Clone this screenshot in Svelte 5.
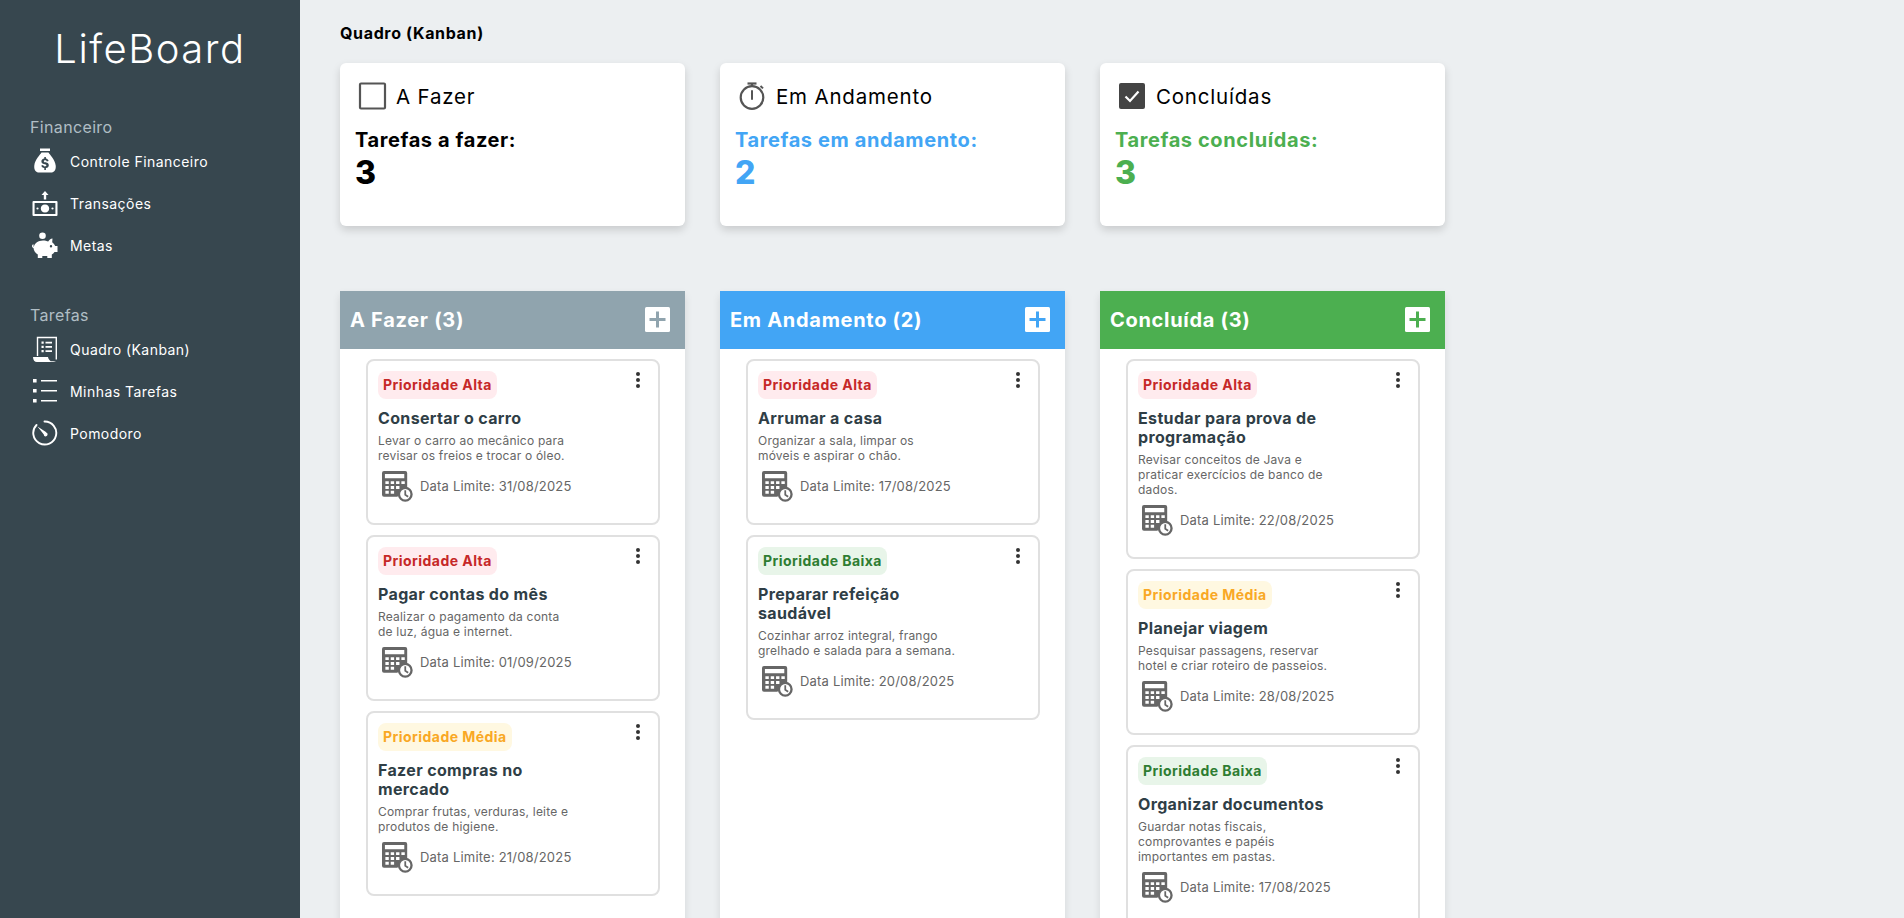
<script>
  const finance = [
    { label: 'Controle Financeiro', icon: 'bag' },
    { label: 'Transações', icon: 'cash' },
    { label: 'Metas', icon: 'piggy' }
  ];
  const tasks = [
    { label: 'Quadro (Kanban)', icon: 'doc' },
    { label: 'Minhas Tarefas', icon: 'list' },
    { label: 'Pomodoro', icon: 'timer' }
  ];

  const stats = [
    { title: 'A Fazer', icon: 'square', label: 'Tarefas a fazer:', value: 3, tone: 'black' },
    { title: 'Em Andamento', icon: 'watch', label: 'Tarefas em andamento:', value: 2, tone: 'blue' },
    { title: 'Concluídas', icon: 'check', label: 'Tarefas concluídas:', value: 3, tone: 'green' }
  ];

  const alta = { text: 'Prioridade Alta', cls: 'alta' };
  const media = { text: 'Prioridade Média', cls: 'media' };
  const baixa = { text: 'Prioridade Baixa', cls: 'baixa' };

  const columns = [
    {
      title: 'A Fazer (3)',
      cls: 'grey',
      cards: [
        { p: alta, title: ['Consertar o carro'], desc: ['Levar o carro ao mecânico para', 'revisar os freios e trocar o óleo.'], date: '31/08/2025' },
        { p: alta, title: ['Pagar contas do mês'], desc: ['Realizar o pagamento da conta', 'de luz, água e internet.'], date: '01/09/2025' },
        { p: media, title: ['Fazer compras no', 'mercado'], desc: ['Comprar frutas, verduras, leite e', 'produtos de higiene.'], date: '21/08/2025' }
      ]
    },
    {
      title: 'Em Andamento (2)',
      cls: 'blue',
      cards: [
        { p: alta, title: ['Arrumar a casa'], desc: ['Organizar a sala, limpar os', 'móveis e aspirar o chão.'], date: '17/08/2025' },
        { p: baixa, title: ['Preparar refeição', 'saudável'], desc: ['Cozinhar arroz integral, frango', 'grelhado e salada para a semana.'], date: '20/08/2025' }
      ]
    },
    {
      title: 'Concluída (3)',
      cls: 'green',
      cards: [
        { p: alta, title: ['Estudar para prova de', 'programação'], desc: ['Revisar conceitos de Java e', 'praticar exercícios de banco de', 'dados.'], date: '22/08/2025' },
        { p: media, title: ['Planejar viagem'], desc: ['Pesquisar passagens, reservar', 'hotel e criar roteiro de passeios.'], date: '28/08/2025' },
        { p: baixa, title: ['Organizar documentos'], desc: ['Guardar notas fiscais,', 'comprovantes e papéis', 'importantes em pastas.'], date: '17/08/2025' }
      ]
    }
  ];
</script>

{#snippet navIcon(name)}
  <svg class="nav-icon" viewBox="0 0 26 26" aria-hidden="true">
    {#if name === 'bag'}
      <path fill="#fff" d="M8 0.5h10v2.5H8z" />
      <path fill="#fff" fill-rule="evenodd" d="M9.5 4.5h7c1.2 2 6.5 7 7.2 13 .5 4.500-1.700 7-4.700 7H7c-3 0-5.200-2.500-4.700-7 .7-6 6-11 7.200-13z M12.300 9v1.500c-1.800.3-2.900 1.400-2.900 2.900 0 3.400 5 2 5 3.900 0 .7-.7 1.100-1.500 1.100-1 0-1.600-.5-1.800-1.300l-1.800.4c.3 1.400 1.300 2.300 3 2.600V22h1.600v-1.900c1.800-.3 2.900-1.400 2.900-2.900 0-3.500-5-2.100-5-3.900 0-.6.600-1 1.400-1 .8 0 1.400.4 1.600 1.200l1.800-.4c-.3-1.300-1.200-2.200-2.700-2.500V9z" />
    {:else if name === 'cash'}
      <path fill="#fff" d="M13 1l3.500 4h-2.300v4.500h-2.400V5H9.500z" />
      <path fill="#fff" fill-rule="evenodd" d="M1.500 11h23a1 1 0 0 1 1 1v13a1 1 0 0 1-1 1h-23a1 1 0 0 1-1-1V12a1 1 0 0 1 1-1z M2.600 13v11h20.800V13z" />
      <path fill="#fff" d="M13 14.500c2.800 0 4.200 2 4.200 4s-1.400 4-4.200 4-4.200-2-4.200-4 1.400-4 4.200-4z" />
      <circle fill="#fff" cx="5.500" cy="18.500" r="1.100" />
      <circle fill="#fff" cx="20.500" cy="18.500" r="1.100" />
    {:else if name === 'piggy'}
      <circle fill="#fff" cx="10.500" cy="3.800" r="3.300" />
      <path fill="#fff" fill-rule="evenodd" d="M20.500 6.500l-.3 3.800c1.400 1 2.400 2.200 3 3.700h2.300v6h-3c-.7 1-1.600 1.900-2.700 2.500V26h-4.500v-2h-5v2H5.800v-3.500C3.300 21 1.800 18.600 1.500 16 .6 15.800 0 15 0 14c0-.9.500-1.600 1.300-1.800l.5 1c-.3.100-.4.400-.4.700 0 .4.200.7.500.8C2.600 11.300 6.300 8.500 11 8.500c2 0 3.800.4 5.200 1.100.9-1.700 2.400-3 4.300-3.100z M19 13a1.200 1.200 0 1 0 0 2.400 1.200 1.200 0 0 0 0-2.400z" />
    {:else if name === 'doc'}
      <path fill="none" stroke="#fff" stroke-width="1.400" d="M5.500 20V1.500h18.800v22" />
      <path fill="#fff" d="M1 21h15c.3 1.800 1.200 3.100 2.700 4.200H24c-.8.500-1.700.8-3 .8H5c-2.400 0-4-2-4-5z" />
      <path fill="#fff" d="M9.500 5.500h2.200v2.200H9.500zM13.500 5.800h6.500v1.600h-6.500zM9.500 9.800h2.200V12H9.500zM13.500 10.100h6.500v1.600h-6.500zM9.500 14h2.200v2.200H9.500zM13.500 14.300h6.500v1.600h-6.500z" />
    {:else if name === 'list'}
      <path fill="#fff" d="M1 1h3.600v3.600H1zM1 11h3.600v3.600H1zM1 21h3.600v3.600H1zM9 2h16v1.500H9zM9 12h16v1.500H9zM9 22h16v1.500H9z" />
    {:else}
      <path fill="none" stroke="#fff" stroke-width="1.900" stroke-linecap="round" d="M12.500 1.500A11.500 11.500 0 1 1 4.500 5" />
      <path fill="#fff" d="M5.500 6.500l8.800 5.700-.4.400a1.900 1.900 0 1 1-2.100 1.900z" />
    {/if}
  </svg>
{/snippet}

{#snippet statIcon(name)}
  <svg class="stat-icon" viewBox="0 0 32 32" aria-hidden="true">
    {#if name === 'square'}
      <rect x="4" y="3.500" width="25" height="25" rx="1" fill="none" stroke="#555" stroke-width="2.200" />
    {:else if name === 'watch'}
      <g fill="none" stroke="#555">
        <circle cx="16" cy="17.500" r="11.300" stroke-width="2.200" />
        <path stroke-width="2.200" d="M11.500 3.500h9" />
        <path stroke-width="2.200" d="M16 3.500v3" />
        <path stroke-width="2" d="M24.500 6l2.500 2.400" />
        <path stroke-width="2" stroke-linecap="round" d="M16 11v8" />
      </g>
    {:else}
      <rect x="3" y="3" width="26" height="26" rx="2" fill="#444" />
      <path d="M9.500 16.500l4.500 4.500 8.500-9.500" fill="none" stroke="#fff" stroke-width="2.200" />
    {/if}
  </svg>
{/snippet}

<div class="app">
  <aside class="sidebar">
    <h1 class="logo">LifeBoard</h1>

    <div class="nav-group">
      <div class="nav-title">Financeiro</div>
      {#each finance as item}
        <div class="nav-item">
          {@render navIcon(item.icon)}
          <span>{item.label}</span>
        </div>
      {/each}
    </div>

    <div class="nav-group second">
      <div class="nav-title">Tarefas</div>
      {#each tasks as item}
        <div class="nav-item">
          {@render navIcon(item.icon)}
          <span>{item.label}</span>
        </div>
      {/each}
    </div>
  </aside>

  <main class="main">
    <h2 class="page-title">Quadro (Kanban)</h2>

    <section class="row stats">
      {#each stats as s}
        <div class="stat">
          <div class="stat-head">
            {@render statIcon(s.icon)}
            <span>{s.title}</span>
          </div>
          <div class="stat-label {s.tone}">{s.label}</div>
          <div class="stat-value {s.tone}">{s.value}</div>
        </div>
      {/each}
    </section>

    <section class="row board">
      {#each columns as col}
        <div class="column">
          <header class="col-head {col.cls}">
            <span>{col.title}</span>
            <svg class="add" viewBox="0 0 25 25" aria-hidden="true">
              <rect width="25" height="25" rx="1.500" fill="#fff" />
              <path class="plus" d="M12.500 4.500v16M4.500 12.500h16" fill="none" stroke-width="3" />
            </svg>
          </header>
          <div class="col-body">
            {#each col.cards as card}
              <article class="task">
                <div class="task-top">
                  <span class="badge {card.p.cls}">{card.p.text}</span>
                  <svg class="dots" viewBox="0 0 6 18" aria-hidden="true">
                    <circle cx="3" cy="3" r="2" />
                    <circle cx="3" cy="9" r="2" />
                    <circle cx="3" cy="15" r="2" />
                  </svg>
                </div>
                <h3 class="task-title">
                  {#each card.title as line}<span>{line}</span>{/each}
                </h3>
                <p class="task-desc">
                  {#each card.desc as line}<span>{line}</span>{/each}
                </p>
                <div class="task-date">
                  <svg class="cal" viewBox="0 0 32 32" aria-hidden="true">
                    <path fill="#666" fill-rule="evenodd" d="M2 0h22a2 2 0 0 1 2 2v19a9 9 0 0 0-10 5.500H2a2 2 0 0 1-2-2V2a2 2 0 0 1 2-2z M3 3v4.500h20V3z M3.500 10.500v3h3.500v-3z M9 10.500v3h3.500v-3z M14.500 10.500v3H18v-3z M20 10.500v3h3.500v-3z M3.500 15.500v3h3.500v-3z M9 15.500v3h3.500v-3z M14.500 15.500v3H18v-3z M3.500 20.500v3h3.500v-3z M9 20.500v3h3.500v-3z" />
                    <circle cx="24" cy="24" r="6.500" fill="#fff" stroke="#666" stroke-width="2.400" />
                    <path d="M24 19.800V24.500l3 2" fill="none" stroke="#666" stroke-width="1.800" />
                  </svg>
                  <span>Data Limite: {card.date}</span>
                </div>
              </article>
            {/each}
          </div>
        </div>
      {/each}
    </section>
  </main>
</div>

<style>
  :global(body) {
    margin: 0;
    font-family: Inter, "Noto Sans", "Liberation Sans", sans-serif;
    background: #eceff1;
  }

  .app {
    display: flex;
    height: 100vh;
    overflow: hidden;
  }

  .sidebar {
    width: 300px;
    flex: none;
    box-sizing: border-box;
    background: #37474f;
    color: #fff;
    padding: 24px 30px 0;
  }

  .logo {
    margin: 0 0 40px;
    font-size: 40px;
    line-height: 50px;
    font-weight: 300;
    text-align: center;
    letter-spacing: 1.5px;
  }

  .nav-group.second {
    margin-top: 36px;
  }

  .nav-title {
    color: #b0bec5;
    font-size: 16px;
    line-height: 26px;
    letter-spacing: 0.35px;
  }

  .nav-item {
    display: flex;
    align-items: center;
    gap: 12px;
    height: 42px;
    padding-left: 2px;
    font-size: 14px;
    letter-spacing: 0.45px;
  }

  .nav-icon {
    width: 26px;
    height: 26px;
    flex: none;
  }

  .main {
    flex: 1;
    min-width: 0;
    padding: 23px 40px 0;
  }

  .page-title {
    margin: 0 0 20px;
    font-size: 16px;
    line-height: 20px;
    font-weight: 700;
    color: #000;
    letter-spacing: 0.65px;
  }

  .row {
    display: grid;
    grid-template-columns: repeat(3, 345px);
    gap: 35px;
  }

  .stats {
    margin-bottom: 65px;
  }

  .stat {
    height: 163px;
    box-sizing: border-box;
    background: #fff;
    border-radius: 6px;
    box-shadow: 0 4px 8px rgba(0, 0, 0, 0.15);
    padding: 17px 15px 0;
  }

  .stat-head {
    display: flex;
    align-items: center;
    gap: 8px;
    height: 32px;
    padding-left: 1px;
    font-size: 20.5px;
    color: #000;
    letter-spacing: 0.8px;
  }

  .stat-icon {
    width: 32px;
    height: 32px;
    flex: none;
  }

  .stat-label {
    margin-top: 16px;
    font-size: 20px;
    line-height: 24px;
    font-weight: 700;
    letter-spacing: 0.6px;
  }

  .stat-value {
    margin-top: 1px;
    font-size: 32px;
    line-height: 39px;
    font-weight: 800;
  }

  .black { color: #000; }
  .stat-label.blue, .stat-value.blue { color: #42a5f5; }
  .stat-label.green, .stat-value.green { color: #4caf50; }

  .column {
    background: #fff;
    box-shadow: 0 4px 8px rgba(0, 0, 0, 0.1);
    min-height: 700px;
  }

  .col-head {
    display: flex;
    align-items: center;
    justify-content: space-between;
    height: 58px;
    padding: 0 15px 0 10px;
    color: #fff;
    font-size: 20px;
    font-weight: 700;
    letter-spacing: 0.7px;
  }

  .col-head.grey { background: #90a4ae; --plus: #90a4ae; }
  .col-head.blue { background: #42a5f5; --plus: #42a5f5; }
  .col-head.green { background: #4caf50; --plus: #4caf50; }

  .add {
    width: 25px;
    height: 25px;
    margin-top: -2px;
  }

  .plus {
    stroke: var(--plus);
  }

  .col-body {
    display: flex;
    flex-direction: column;
    gap: 10px;
    padding: 10px 25px 10px 26px;
  }

  .task {
    box-sizing: border-box;
    border: 2px solid #e0e0e0;
    border-radius: 8px;
    padding: 10px 10px 21px;
  }

  .task-top {
    display: flex;
    align-items: flex-start;
    justify-content: space-between;
    height: 28px;
  }

  .badge {
    display: inline-block;
    height: 28px;
    line-height: 28px;
    padding: 0 5px;
    border-radius: 8px;
    font-size: 14px;
    font-weight: 700;
    letter-spacing: 0.45px;
  }

  .alta { background: #ffebee; color: #c62828; }
  .media { background: #fff8e1; color: #f9a825; }
  .baixa { background: #e8f5e9; color: #2e7d32; }

  .dots {
    width: 6px;
    height: 18px;
    margin-right: 7px;
    fill: #333;
    flex: none;
  }

  .task-title {
    margin: 10px 0 0;
    font-size: 16px;
    line-height: 19px;
    font-weight: 700;
    color: #2f3e46;
    letter-spacing: 0.35px;
  }

  .task-title span, .task-desc span {
    display: block;
  }

  .task-desc {
    margin: 5px 0 0;
    font-size: 12px;
    line-height: 15px;
    color: #666;
    letter-spacing: 0.2px;
  }

  .task-date {
    display: flex;
    align-items: center;
    gap: 7px;
    margin-top: 7px;
    padding-left: 4px;
    height: 32px;
    font-size: 13px;
    color: #666;
    letter-spacing: 0.2px;
  }

  .cal {
    width: 31px;
    height: 31px;
    flex: none;
  }
</style>
